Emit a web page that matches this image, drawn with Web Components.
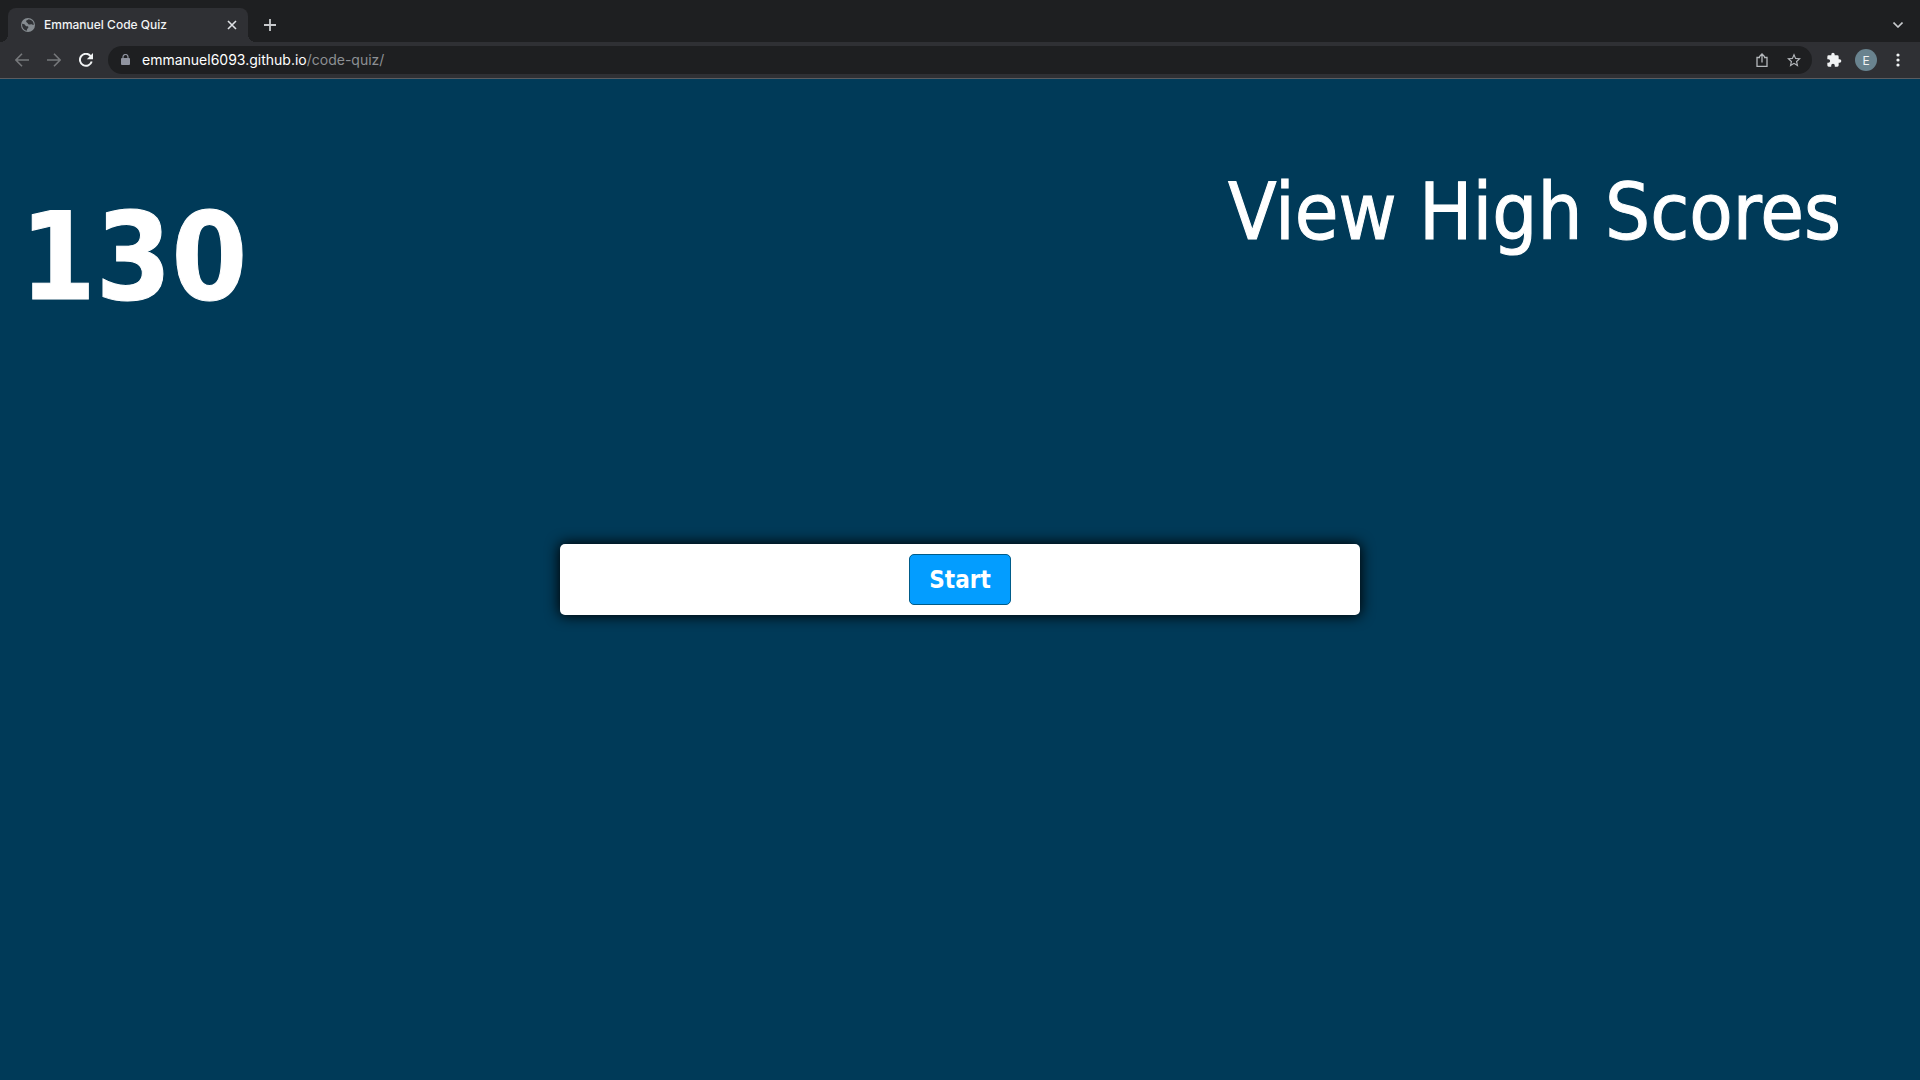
<!DOCTYPE html>
<html lang="en">
<head>
<meta charset="utf-8">
<title>Emmanuel Code Quiz</title>
<style>
html, body { margin: 0; height: 100%; }
body { background: #003a58; color: #fff; overflow: hidden; font-family: Tahoma, "DejaVu Sans Condensed", "DejaVu Sans", sans-serif; }
</style>
</head>
<body>
<app-window>
  <tab-strip slot="chrome"><browser-tab>Emmanuel Code Quiz</browser-tab></tab-strip>
  <tool-bar slot="chrome"><address-bar><span slot="host">emmanuel6093.github.io</span><span slot="path">/code-quiz/</span></address-bar></tool-bar>
  <quiz-page>
    <quiz-timer slot="timer">130</quiz-timer>
    <score-link slot="scores">View High Scores</score-link>
    <quiz-card><start-button>Start</start-button></quiz-card>
  </quiz-page>
</app-window>
<script>
const reset = `
  :host, *, *::before, *::after { box-sizing: border-box; }
  button { margin: 0; padding: 0; border: 0; background: none; color: inherit; font: inherit; display: flex; align-items: center; justify-content: center; flex: none; }
  svg { display: block; flex: none; }
`;
function define(name, css, html) {
  const template = document.createElement('template');
  template.innerHTML = `<style>${reset}${css}</style>${html}`;
  customElements.define(name, class extends HTMLElement {
    constructor() {
      super();
      this.attachShadow({ mode: 'open' }).append(template.content.cloneNode(true));
    }
  });
}

define('app-window', `
  :host { display: flex; flex-direction: column; min-height: 100vh; }
  header { font-family: Inter, "Liberation Sans", sans-serif; border-bottom: 1px solid #5b5c60; }
  main { flex: 1; display: flex; }
`, `<header><slot name="chrome"></slot></header><main><slot></slot></main>`);

define('tab-strip', `
  :host { display: flex; align-items: flex-end; height: 42px; padding: 0 8px; background: #1e1f21; color: #c8cacd; }
  .new { width: 28px; height: 34px; margin-left: 8px; }
  .list { width: 28px; height: 34px; margin-left: auto; }
`, `<slot></slot>
  <button class="new" aria-label="New tab"><svg width="12" height="12" viewBox="0 0 12 12" fill="none" stroke="currentColor" stroke-width="1.8"><path d="M6 0v12M0 6h12"/></svg></button>
  <button class="list" aria-label="Search tabs"><svg width="10" height="6" viewBox="0 0 10 6" fill="none" stroke="currentColor" stroke-width="1.6"><path d="M.5.5 5 5 9.500.5"/></svg></button>`);

define('browser-tab', `
  :host { display: flex; align-items: center; width: 240px; height: 34px; padding: 0 11px 0 13px; background:
    #2f3034; border-radius: 8px 8px 0 0; color: #f1f3f4; font-size: 12px; position: relative; }
  :host::before, :host::after { content: ""; position: absolute; bottom: 0; width: 8px; height: 8px; }
  :host::before { left: -8px; background: radial-gradient(circle at 0 0, transparent 8px, #2f3034 8px); }
  :host::after { right: -8px; background: radial-gradient(circle at 100% 0, transparent 8px, #2f3034 8px); }
  .title { flex: 1; margin-left: 9px; line-height: 16px; padding-bottom: 1px; font-weight: 500; white-space: nowrap; }
`, `<svg width="14" height="14" viewBox="0 0 14 14"><circle cx="7" cy="7" r="7" fill="#858b90"/><path d="M1.200 5.800C3 6 3.700 6.200 4.200 7.200S5.600 8.200 6.600 8.300 7.600 9.900 6.600 10.500 6 12.300 6.300 12.800A5.900 5.900 0 0 1 1.200 5.800ZM7.800 1.200C6.600 2.200 5 2 5.100 3.300S6.600 4.500 6.900 5.600 8.800 6.700 9.800 6.300 11.500 7.300 12.800 6.800A5.900 5.900 0 0 0 7.800 1.200Z" fill="#303236"/></svg>
  <span class="title"><slot></slot></span>
  <button aria-label="Close tab"><svg width="10" height="10" viewBox="0 0 10 10" fill="none" stroke="#dfe1e5" stroke-width="1.600"><path d="m1 1 8 8m0-8-8 8"/></svg></button>`);

define('tool-bar', `
  :host { display: flex; align-items: center; height: 36px; padding: 0 8px; background: #2f3034; color: #f1f3f4; }
  button { width: 28px; height: 28px; margin-right: 4px; }
  .dim { color: #76787b; }
  ::slotted(*) { flex: 1; margin: 0 8px 0 4px; }
  .extensions { margin: 0; }
  .avatar { width: 22px; height: 22px; margin: 0 7px; border-radius: 50%; background: #69838f; font-size: 12px; }
  .menu { margin: 0; }
`, `
  <button class="dim" aria-label="Back"><svg width="14" height="14" viewBox="0 0 14 14" fill="none" stroke="currentColor" stroke-width="1.600"><path d="M14 7H1M7 .8.9 7 7 13.200"/></svg></button>
  <button class="dim" aria-label="Forward"><svg width="14" height="14" viewBox="0 0 14 14" fill="none" stroke="currentColor" stroke-width="1.600"><path d="M0 7h13M7 .8 13.100 7 7 13.200"/></svg></button>
  <button aria-label="Reload"><svg width="14" height="14" viewBox="0 0 14 14"><path d="M12.700 8.500A6 6 0 1 1 11.400 2.800L12.500 4" fill="none" stroke="currentColor" stroke-width="2"/><path d="M14 0v6.200H7.800Z" fill="currentColor"/></svg></button>
  <slot></slot>
  <button class="extensions" aria-label="Extensions"><svg width="16" height="16" viewBox="0 0 24 24" fill="currentColor"><path d="M20.500 11H19V7a2 2 0 0 0-2-2h-4V3.500a2.500 2.500 0 0 0-5 0V5H4a2 2 0 0 0-2 2v3.800h1.500a2.700 2.700 0 0 1 0 5.400H2V20a2 2 0 0 0 2 2h3.800v-1.500a2.700 2.700 0 0 1 5.400 0V22H17a2 2 0 0 0 2-2v-4h1.500a2.500 2.500 0 0 0 0-5Z"/></svg></button>
  <button class="avatar" aria-label="Profile">E</button>
  <button class="menu" aria-label="Menu"><svg width="4" height="14" viewBox="0 0 4 14" fill="currentColor"><circle cx="2" cy="2" r="1.600"/><circle cx="2" cy="7" r="1.600"/><circle cx="2" cy="12" r="1.600"/></svg></button>`);

define('address-bar', `
  :host { display: flex; align-items: center; height: 28px; padding: 0 4px 0 13px; border-radius: 14px; background: #1e1f21; font-size: 14px; color: #fff; }
  .url { flex: 1; margin-left: 12px; line-height: 16px; padding-bottom: 1px; white-space: nowrap; }
  .path { color: #8d9094; }
  button { width: 28px; height: 28px; margin-left: 4px; color: #b5b8bc; }
`, `<svg width="9" height="12" viewBox="0 0 9 12"><rect y="4" width="9" height="7" rx="1" fill="#9094a0"/><path d="M2 5V3a2.500 2.500 0 0 1 5 0v2" fill="none" stroke="#9094a0" stroke-width="1.200"/></svg>
  <span class="url"><slot name="host"></slot><span class="path"><slot name="path"></slot></span></span>
  <button aria-label="Share"><svg width="12" height="14" viewBox="0 0 12 14" fill="none" stroke="currentColor" stroke-width="1.300"><path d="M4 4.500H1v9h10v-9H8M6 9.500V1M3.300 3.700 6 1l2.700 2.700"/></svg></button>
  <button aria-label="Bookmark"><svg width="14" height="14" viewBox="0 0 24 24" fill="currentColor"><path d="m24 9.200-8.600-.8L12 .500 8.600 8.400 0 9.200l6.500 5.700L4.600 23.400 12 18.900l7.400 4.500-1.900-8.500ZM12 16.700l-4.500 2.700 1.200-5.100-4-3.500 5.200-.4L12 5.500l2.100 4.900 5.200.4-4 3.500 1.200 5.100Z"/></svg></button>`);

define('quiz-page', `
  :host { flex: 1; display: flex; flex-direction: column; }
  .top { display: flex; justify-content: space-between; align-items: flex-start; height: 465px; padding: 85px 79px 0 20px; }
  .center { display: flex; justify-content: center; }
`, `<div class="top"><slot name="timer"></slot><slot name="scores"></slot></div><div class="center"><slot></slot></div>`);

define('quiz-timer', `
  :host { display: block; }
  h1 { margin: 22px 0 0; font-size: 121px; line-height: 144px; font-weight: 700; -webkit-text-stroke: 1px #fff; }
`, `<h1><slot></slot></h1>`);

define('score-link', `
  :host { display: block; }
  a { display: block; color: #fff; text-decoration: none; font-size: 79px; line-height: 96px; white-space: nowrap; -webkit-text-stroke: 1px #fff; }
`, `<a href="#scores"><slot></slot></a>`);

define('quiz-card', `
  :host { display: flex; justify-content: center; width: 800px; max-width: 80%; padding: 10px; background: #fff; border-radius: 5px; box-shadow: 0 0 14px 1px #000; }
`, `<slot></slot>`);

define('start-button', `
  :host { display: block; }
  button { height: 51px; padding: 1px 19px 0; border: 1px solid #005c8a; border-radius: 5px; background: #039dff; color: #fff; font-size: 24px; font-weight: 700; }
`, `<button type="button"><slot></slot></button>`);
</script>
</body>
</html>
